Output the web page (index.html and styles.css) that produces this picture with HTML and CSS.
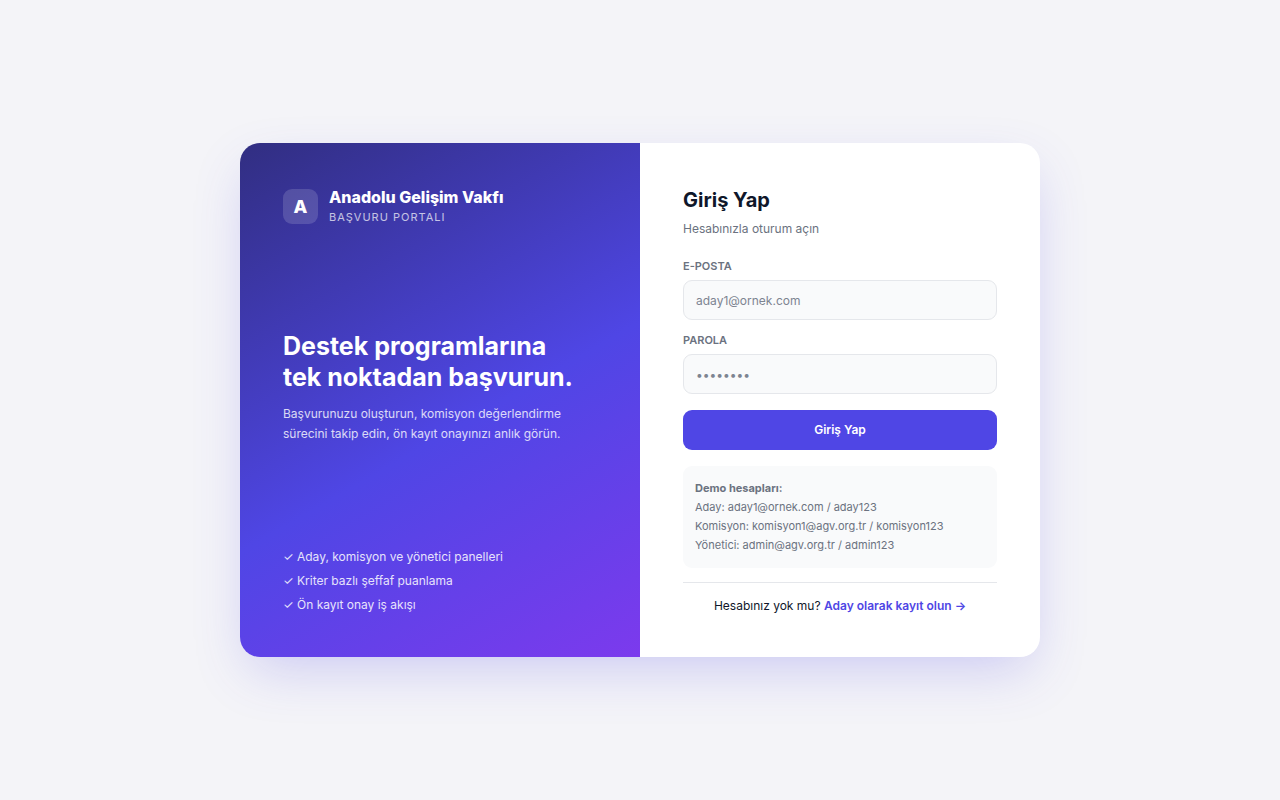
FILE: index.html
```html
<!DOCTYPE html>
<html lang="tr">
<head>
    <meta charset="UTF-8">
    <meta name="viewport" content="width=device-width, initial-scale=1.0">
    <title>Giriş Yap - Anadolu Gelişim Vakfı</title>
    <link rel="stylesheet" href="styles.css">
</head>
<body>
    <main class="login-card">
        <section class="intro">
            <div class="brand">
                <div class="brand-mark">A</div>
                <div>
                    <div class="brand-name">Anadolu Gelişim Vakfı</div>
                    <div class="brand-sub">BAŞVURU PORTALI</div>
                </div>
            </div>
            <div>
                <h1>Destek programlarına<br>tek noktadan başvurun.</h1>
                <p class="lead">Başvurunuzu oluşturun, komisyon değerlendirme sürecini takip edin, ön kayıt onayınızı anlık görün.</p>
            </div>
            <ul class="features">
                <li>✓ Aday, komisyon ve yönetici panelleri</li>
                <li>✓ Kriter bazlı şeffaf puanlama</li>
                <li>✓ Ön kayıt onay iş akışı</li>
            </ul>
        </section>
        <section class="login">
            <h2>Giriş Yap</h2>
            <p class="subtitle">Hesabınızla oturum açın</p>
            <form>
                <label for="email">E-POSTA</label>
                <input type="email" id="email" name="email" placeholder="aday1@ornek.com" required>
                <label for="password">PAROLA</label>
                <input type="password" id="password" name="password" placeholder="••••••••" required>
                <button type="submit">Giriş Yap</button>
            </form>
            <div class="demo">
                <strong>Demo hesapları:</strong><br>
                Aday: aday1@ornek.com / aday123<br>
                Komisyon: komisyon1@agv.org.tr / komisyon123<br>
                Yönetici: admin@agv.org.tr / admin123
            </div>
            <p class="register">Hesabınız yok mu? <a href="#">Aday olarak kayıt olun →</a></p>
        </section>
    </main>
</body>
</html>
```
FILE: styles.css
```css
* {
    box-sizing: border-box;
    margin: 0;
    padding: 0;
}
body {
    font-family: Inter, sans-serif;
    font-size: 14px;
    line-height: 1.5;
    min-height: 100vh;
    display: flex;
    align-items: center;
    justify-content: center;
    padding: 20px;
    background: #f4f4f8;
    color: #0f172a;
}
.login-card {
    display: grid;
    grid-template-columns: 1fr 1fr;
    width: 100%;
    max-width: 800px;
    background: white;
    border-radius: 20px;
    overflow: hidden;
    box-shadow: 0 20px 54px -10px rgba(79, 70, 229, 0.25);
}
.intro {
    display: flex;
    flex-direction: column;
    justify-content: space-between;
    padding: 43px;
    background: linear-gradient(150deg, #312e81 0%, #4f46e5 55%, #7c3aed 100%);
    color: white;
}
.brand {
    display: flex;
    align-items: center;
    gap: 11px;
}
.brand-mark {
    width: 35px;
    height: 35px;
    display: flex;
    align-items: center;
    justify-content: center;
    border-radius: 9px;
    background: rgba(255, 255, 255, 0.15);
    font-size: 18px;
    font-weight: 800;
}
.brand-name {
    font-size: 16px;
    font-weight: 800;
    line-height: 22px;
}
.brand-sub {
    font-size: 11px;
    line-height: 18px;
    letter-spacing: 1px;
    opacity: 0.7;
}
h1 {
    font-size: 25px;
    font-weight: 700;
    line-height: 31px;
    margin-bottom: 11px;
}
.lead {
    font-size: 12px;
    line-height: 20px;
    opacity: 0.8;
}
.features {
    list-style: none;
    font-size: 12px;
    line-height: 18px;
    display: grid;
    gap: 6px;
    opacity: 0.85;
}
.login {
    padding: 43px;
}
h2 {
    font-size: 20px;
    line-height: 28px;
    margin-bottom: 5px;
}
.subtitle {
    font-size: 12px;
    line-height: 20px;
    color: #6b7280;
    margin-bottom: 18px;
}
label {
    display: block;
    font-size: 11px;
    font-weight: 600;
    line-height: 18px;
    color: #6b7280;
    margin-bottom: 5px;
}
input {
    display: block;
    width: 100%;
    height: 40px;
    padding: 0 12px;
    border: 1px solid #e5e7eb;
    border-radius: 9px;
    background: #f9fafb;
    font: inherit;
    font-size: 12px;
    margin-bottom: 11px;
}
input::placeholder {
    color: #7d8491;
}
button {
    width: 100%;
    height: 40px;
    margin-top: 5px;
    border: none;
    border-radius: 9px;
    background: #4f46e5;
    color: white;
    font: inherit;
    font-size: 12px;
    font-weight: 600;
    cursor: pointer;
}
button:hover {
    background: #4338ca;
}
.demo {
    margin-top: 16px;
    padding: 13px 12px;
    border-radius: 9px;
    background: #f9fafb;
    color: #6b7280;
    font-size: 11px;
    line-height: 19px;
}
.register {
    margin-top: 14px;
    padding-top: 14px;
    border-top: 1px solid #e5e7eb;
    text-align: center;
    font-size: 12px;
    line-height: 17px;
}
.register a {
    color: #4f46e5;
    font-weight: 600;
    text-decoration: none;
}
```
